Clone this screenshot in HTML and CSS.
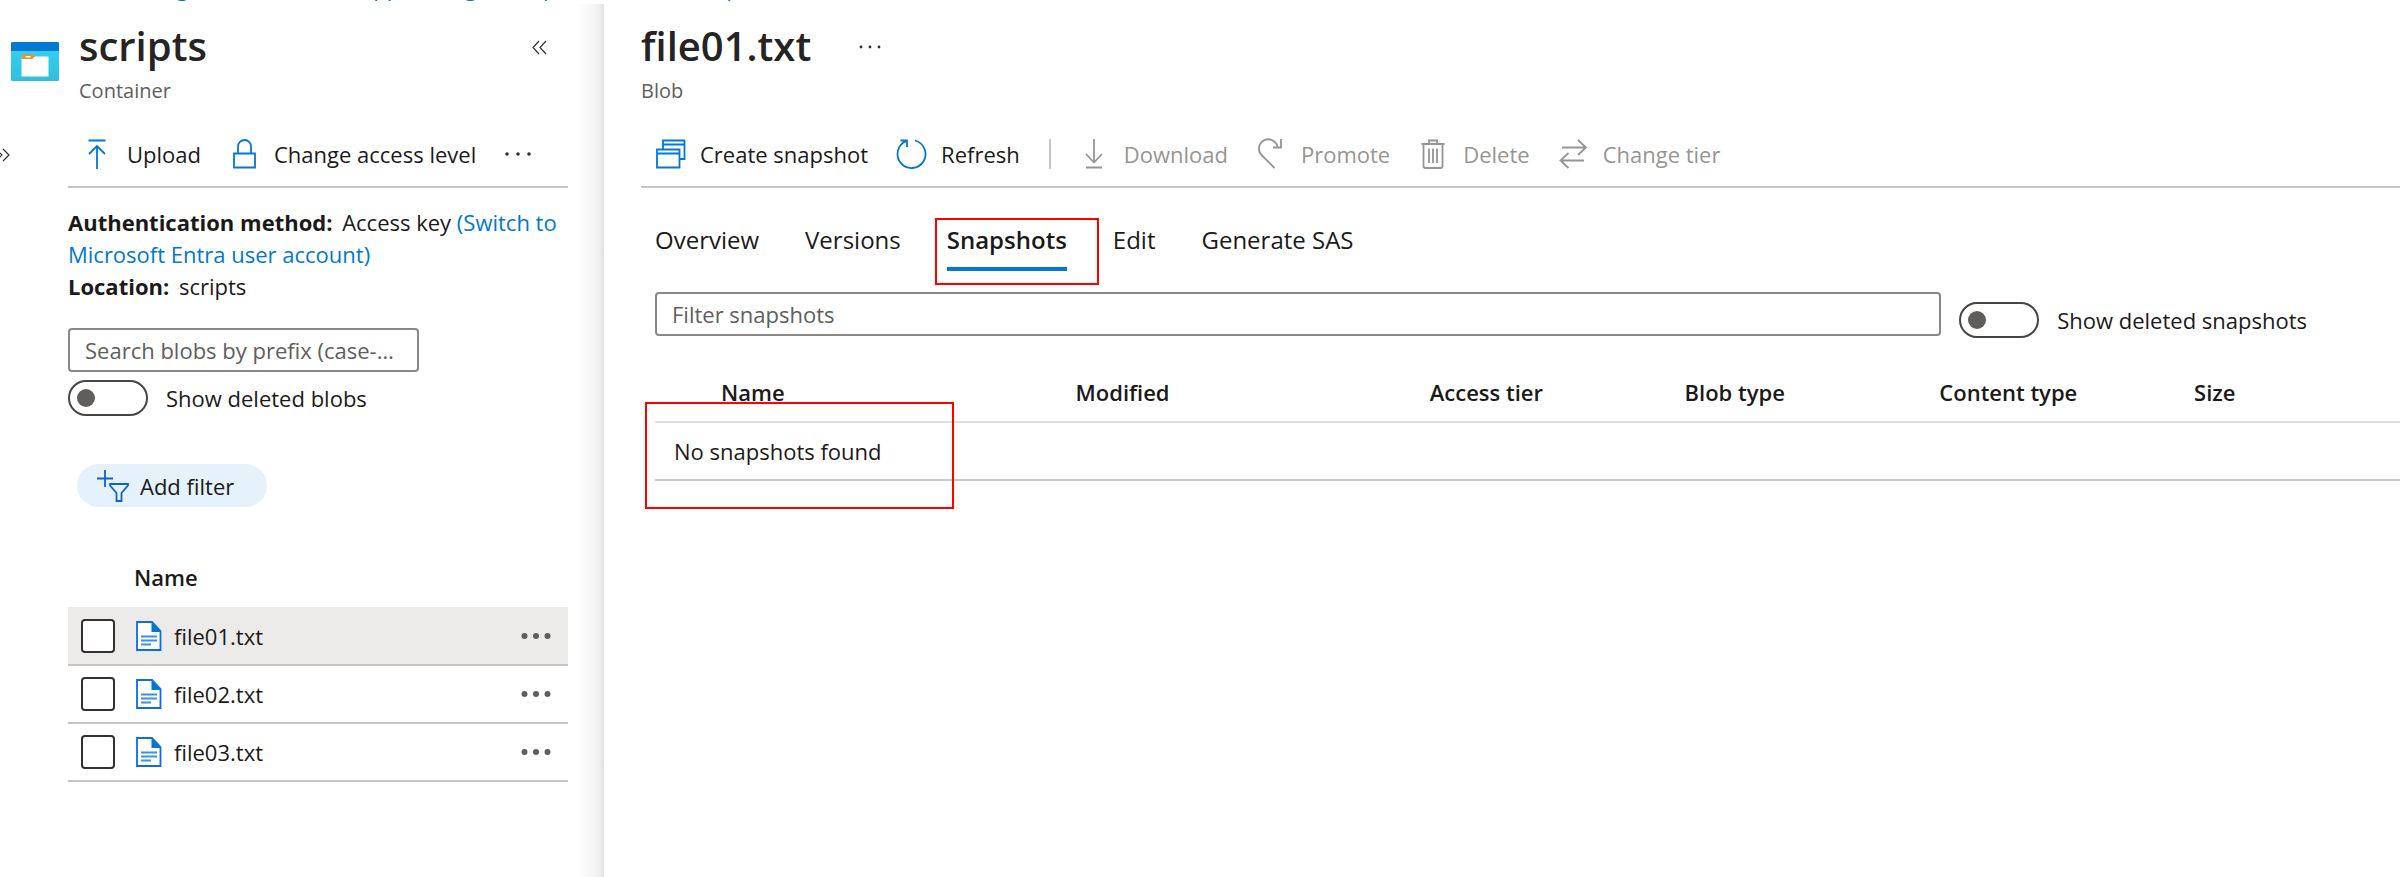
FILE: index.html
```
<!DOCTYPE html>
<html lang="en">
<head>
    <meta charset="UTF-8">
    <meta name="viewport" content="width=device-width, initial-scale=1.0">
    <title>file01.txt - Blob</title>
    <link rel="stylesheet" href="styles.css">
</head>
<body>
    <nav class="breadcrumb" aria-label="Breadcrumb">
        <a href="#">Storage accounts</a>
        <a href="#">webapp-settings</a>
        <a href="#">scripts</a>
        <a href="#">Containers</a>
        <a href="#">preview</a>
    </nav>
    <div class="page">
        <aside class="container-blade">
            <div class="rail">
                <svg class="container-icon" viewBox="0 0 48 39">
                    <defs>
                        <linearGradient id="sky" x1="0" y1="0" x2="0" y2="1">
                            <stop offset="0" stop-color="#32d4f5"/>
                            <stop offset="1" stop-color="#32bedd"/>
                        </linearGradient>
                    </defs>
                    <rect width="48" height="39" rx="1.5" fill="url(#sky)"/>
                    <path d="M0 9V1.5Q0 0 1.5 0H46.500Q48 0 48 1.500V9z" fill="#0078d4"/>
                    <path d="M10.500 15H24V14.500H37.500V34.500H10.500z" fill="#fff"/>
                    <path d="M11.500 12.500H22L24 14.500 21 17H10.500V13.500z" fill="#f78d1e"/>
                    <rect x="14.500" y="14" width="5" height="1.500" fill="#fff"/>
                </svg>
                <button class="expand" aria-label="Expand menu">
                    <svg viewBox="0 0 18 16"><path d="M3 2l6 6-6 6M10 2l6 6-6 6" class="thin"/></svg>
                </button>
            </div>
            <div class="blade-content">
                <header class="blade-header">
                    <div>
                        <h1>scripts</h1>
                        <p class="subtitle">Container</p>
                    </div>
                    <button class="collapse" aria-label="Collapse">
                        <svg viewBox="0 0 18 16"><path d="M9 2L3 8.500l6 6.500M16 2L10 8.500l6 6.500" class="thin"/></svg>
                    </button>
                </header>
                <div class="toolbar">
                    <button class="tool">
                        <svg class="icon blue" viewBox="0 0 28 30"><path d="M5.500 1.500h17M14 30V7M6 15l8-8 8 8"/></svg>
                        Upload
                    </button>
                    <button class="tool">
                        <svg class="icon blue" viewBox="0 0 28 30"><path d="M4 14.500h21v14H4zM8 14.500V7.500a6.500 6.500 0 0 1 13 0v7"/></svg>
                        Change access level
                    </button>
                    <button class="tool more" aria-label="More">
                        <svg class="dots" viewBox="0 0 26 6"><circle cx="2" cy="3" r="1.800"/><circle cx="13" cy="3" r="1.800"/><circle cx="24" cy="3" r="1.800"/></svg>
                    </button>
                </div>
                <div class="info">
                    <p><b>Authentication method:</b> Access key <a href="#">(Switch to Microsoft Entra user account)</a></p>
                    <p><b>Location:</b> scripts</p>
                </div>
                <input class="textbox search" type="text" aria-label="Search blobs" placeholder="Search blobs by prefix (case-sensitive)">
                <label class="toggle"><input type="checkbox" role="switch"> Show deleted blobs</label>
                <button class="add-filter">
                    <svg viewBox="0 0 34 32"><path d="M9 0v17M1 8.500h16M14 14h18v1.500l-6.500 7.500v8h-5v-8L14 15.500z"/></svg>
                    Add filter
                </button>
                <table class="files">
                    <thead>
                        <tr><th class="check-col"></th><th>Name</th><th class="menu-col"></th></tr>
                    </thead>
                    <tbody>
                        <tr class="selected">
                            <td><input class="check" type="checkbox" aria-label="Select file01.txt"></td>
                            <td><div class="file"><svg viewBox="0 0 26 30"><path d="M1 1h15l8.500 9v19H1z" fill="#fff" stroke="#0f6cde" stroke-width="1.800"/><path d="M15.500 1v10h9.500z" fill="#0078d4"/><path d="M5 15.500h16M5 19.500h16M5 23.500h10" stroke="#3d8ef0" stroke-width="1.800"/></svg>file01.txt</div></td>
                            <td><button class="row-menu" aria-label="Menu"><svg viewBox="0 0 30 8"><circle cx="3.500" cy="4" r="3"/><circle cx="15" cy="4" r="3"/><circle cx="26.500" cy="4" r="3"/></svg></button></td>
                        </tr>
                        <tr>
                            <td><input class="check" type="checkbox" aria-label="Select file02.txt"></td>
                            <td><div class="file"><svg viewBox="0 0 26 30"><path d="M1 1h15l8.500 9v19H1z" fill="#fff" stroke="#0f6cde" stroke-width="1.800"/><path d="M15.500 1v10h9.500z" fill="#0078d4"/><path d="M5 15.500h16M5 19.500h16M5 23.500h10" stroke="#3d8ef0" stroke-width="1.800"/></svg>file02.txt</div></td>
                            <td><button class="row-menu" aria-label="Menu"><svg viewBox="0 0 30 8"><circle cx="3.500" cy="4" r="3"/><circle cx="15" cy="4" r="3"/><circle cx="26.500" cy="4" r="3"/></svg></button></td>
                        </tr>
                        <tr>
                            <td><input class="check" type="checkbox" aria-label="Select file03.txt"></td>
                            <td><div class="file"><svg viewBox="0 0 26 30"><path d="M1 1h15l8.500 9v19H1z" fill="#fff" stroke="#0f6cde" stroke-width="1.800"/><path d="M15.500 1v10h9.500z" fill="#0078d4"/><path d="M5 15.500h16M5 19.500h16M5 23.500h10" stroke="#3d8ef0" stroke-width="1.800"/></svg>file03.txt</div></td>
                            <td><button class="row-menu" aria-label="Menu"><svg viewBox="0 0 30 8"><circle cx="3.500" cy="4" r="3"/><circle cx="15" cy="4" r="3"/><circle cx="26.500" cy="4" r="3"/></svg></button></td>
                        </tr>
                    </tbody>
                </table>
            </div>
        </aside>

        <main class="blob-blade">
            <header class="blade-header blob-header">
                <div>
                    <h1>file01.txt</h1>
                    <p class="subtitle">Blob</p>
                </div>
                <button class="title-more" aria-label="More">
                    <svg viewBox="0 0 22 6"><circle cx="2" cy="3" r="1.400"/><circle cx="11" cy="3" r="1.400"/><circle cx="20" cy="3" r="1.400"/></svg>
                </button>
            </header>
            <div class="toolbar blob-toolbar">
                <button class="tool">
                    <svg class="icon blue" viewBox="0 0 28 30"><path d="M7 10V1.500H28.500V20H24M7 5.500H28.500M1 10.500h22.500v18H1zM1 14.500h22.500"/></svg>
                    Create snapshot
                </button>
                <button class="tool">
                    <svg class="icon blue" viewBox="0 0 28 30"><path d="M18 1.500a14 14 0 1 1-9 .7M3.500 1.500h6.500v6.500"/></svg>
                    Refresh
                </button>
                <span class="divider"></span>
                <button class="tool" disabled>
                    <svg class="icon" viewBox="0 0 28 30"><path d="M14 0v23.500M6 15l8 8.500 8-8.500M6 28.500h16"/></svg>
                    Download
                </button>
                <button class="tool" disabled>
                    <svg class="icon" viewBox="0 0 28 30"><path d="M17.500 29L5 16.500A9.300 9.300 0 1 1 20.500 8.500M24 0v8.500h-8"/></svg>
                    Promote
                </button>
                <button class="tool" disabled>
                    <svg class="icon" viewBox="0 0 28 30"><path d="M2.500 5h23M10 5V1.500h8V5M4.500 5v22q0 2 2 2h15q2 0 2-2V5M10 9.500v14.500M14 9.500v14.500M18 9.500v14.500"/></svg>
                    Delete
                </button>
                <button class="tool" disabled>
                    <svg class="icon" viewBox="0 0 28 30"><path d="M3 8.500h24M19 1l8 7.500-8 7.500M25 21.500H1.500M9.500 14l-8 7.500 8 7.500"/></svg>
                    Change tier
                </button>
            </div>
            <div class="blob-body">
                <div class="tabs" role="tablist">
                    <button class="tab" role="tab">Overview</button>
                    <button class="tab" role="tab">Versions</button>
                    <button class="tab active" role="tab" aria-selected="true">Snapshots</button>
                    <button class="tab" role="tab">Edit</button>
                    <button class="tab" role="tab">Generate SAS</button>
                </div>
                <div class="filter-row">
                    <input class="textbox" type="text" aria-label="Filter snapshots" placeholder="Filter snapshots">
                    <label class="toggle"><input type="checkbox" role="switch"> Show deleted snapshots</label>
                </div>
                <div class="snapshots">
                    <table>
                        <thead>
                            <tr>
                                <th class="name-col">Name</th>
                                <th class="modified-col">Modified</th>
                                <th class="type-col">Access tier</th>
                                <th class="type-col">Blob type</th>
                                <th class="type-col">Content type</th>
                                <th>Size</th>
                            </tr>
                        </thead>
                        <tbody>
                            <tr><td colspan="6">No snapshots found</td></tr>
                        </tbody>
                    </table>
                </div>
            </div>
        </main>
    </div>
</body>
</html>
```
FILE: styles.css
```
*, *::before, *::after {
    box-sizing: border-box;
}

body, h1, p, table {
    margin: 0;
    padding: 0;
}

body {
    font-family: "Open Sans", "Noto Sans", sans-serif;
    font-size: 22px;
    line-height: 32px;
    color: #1b1a19;
    background-color: #fff;
    height: 100vh;
    overflow: hidden;
    display: flex;
    flex-direction: column;
}

button, input {
    font: inherit;
    color: inherit;
}

button {
    padding: 0;
    border: none;
    background: none;
    display: flex;
    align-items: center;
    cursor: pointer;
}

svg {
    display: block;
    flex: none;
    overflow: visible;
}

a {
    color: #0078d4;
    text-decoration: none;
}

/* breadcrumb is scrolled almost out of view */
.breadcrumb {
    height: 3px;
    margin-bottom: 1px;
    padding-left: 122px;
    display: flex;
    align-items: flex-end;
    gap: 20px;
    overflow: hidden;
    white-space: nowrap;
}

.page {
    flex: 1;
    display: flex;
}

.container-blade {
    width: 604px;
    flex: none;
    display: flex;
    padding-right: 36px;
    background: linear-gradient(to left, #e0e0e0, #f0f0f0 5px, #f8f8f8 14px, #fff 30px);
}

.rail {
    width: 68px;
    flex: none;
    padding: 38px 0 0 11px;
}

.container-icon {
    width: 48px;
    height: 39px;
}

.expand {
    margin: 66px 0 0 -18px;
}

.expand svg, .collapse svg {
    width: 18px;
    height: 16px;
}

.thin {
    fill: none;
    stroke: #323130;
    stroke-width: 1.2;
}

.blade-content {
    flex: 1;
    min-width: 0;
}

.blade-header {
    height: 120px;
    padding: 14px 20px 0 11px;
    display: flex;
    justify-content: space-between;
    align-items: flex-start;
}

h1 {
    font-size: 40px;
    line-height: 56px;
    font-weight: 600;
    color: #252423;
}

.subtitle {
    font-size: 20px;
    line-height: 34px;
    color: #605e5c;
}

.collapse {
    margin-top: 21px;
}

.toolbar {
    height: 64px;
    padding: 0 16px 3px 15px;
    display: flex;
    align-items: center;
    gap: 29px;
    border-bottom: 2px solid #c8c6c4;
}

.tool {
    gap: 16px;
    white-space: nowrap;
}

.tool:disabled {
    color: #979593;
}

.icon {
    width: 28px;
    height: 30px;
    fill: none;
    stroke: #979593;
    stroke-width: 1.8;
}

.icon.blue {
    stroke: #0078d4;
}

.dots {
    width: 26px;
    height: 6px;
    fill: #323130;
}

.info {
    padding: 18px 0 26px;
}

.info b {
    margin-right: 4px;
}

.textbox {
    height: 44px;
    padding: 0 15px;
    border: 2px solid #8a8886;
    border-radius: 4px;
    background-color: #fff;
    text-overflow: ellipsis;
}

.textbox::placeholder {
    color: #605e5c;
    opacity: 1;
}

.search {
    display: block;
    width: 351px;
}

.toggle {
    display: flex;
    align-items: center;
    gap: 18px;
    white-space: nowrap;
}

.toggle input {
    appearance: none;
    flex: none;
    width: 80px;
    height: 36px;
    margin: 0;
    padding: 7px;
    border: 2px solid #484644;
    border-radius: 18px;
    background-color: #fff;
}

.toggle input::before {
    content: "";
    display: block;
    width: 18px;
    height: 18px;
    border-radius: 50%;
    background-color: #605e5c;
}

.search + .toggle {
    margin-top: 8px;
}

.add-filter {
    height: 43px;
    margin: 48px 0 0 9px;
    padding: 0 33px 0 19px;
    gap: 10px;
    border-radius: 22px;
    background-color: #e5f1fb;
}

.add-filter svg {
    width: 34px;
    height: 32px;
    fill: none;
    stroke: #0f5fd7;
    stroke-width: 1.8;
}

table {
    width: 100%;
    border-collapse: collapse;
    table-layout: fixed;
}

th {
    padding: 0;
    text-align: left;
    font-weight: 600;
}

td {
    padding: 0;
}

.files {
    margin-top: 40px;
}

.files th {
    height: 60px;
}

.files tbody tr {
    height: 58px;
    border-bottom: 2px solid #c8c6c4;
}

.files .selected {
    background-color: #edebe9;
}

.check-col {
    width: 66px;
}

.menu-col {
    width: 47px;
}

.check {
    appearance: none;
    display: block;
    width: 34px;
    height: 34px;
    margin: 0 0 0 13px;
    border: 2px solid #323130;
    border-radius: 4px;
    background-color: #fff;
}

.file {
    display: flex;
    align-items: center;
    gap: 12px;
    padding-left: 2px;
}

.file svg {
    width: 26px;
    height: 30px;
}

.row-menu svg {
    width: 30px;
    height: 8px;
    fill: #605e5c;
}

.blob-blade {
    flex: 1;
    min-width: 0;
    padding-left: 37px;
    background-color: #fff;
}

.blob-header {
    padding-left: 0;
    justify-content: flex-start;
    gap: 48px;
}

.title-more {
    margin-top: 26px;
}

.title-more svg {
    width: 22px;
    height: 6px;
    fill: #323130;
}

.divider {
    width: 2px;
    height: 30px;
    background-color: #c8c6c4;
}

.blob-body {
    padding-left: 14px;
}

.tabs {
    display: flex;
    gap: 46px;
    padding-top: 34px;
    font-size: 24px;
}

.tab {
    height: 49px;
    align-items: flex-start;
    padding-top: 2px;
    position: relative;
}

.tab.active {
    font-weight: 600;
    border-bottom: 4px solid #0078d4;
}

/* red callout boxes */
.tab.active::after, .snapshots::after {
    content: "";
    position: absolute;
    border: 2px solid #f00;
    pointer-events: none;
}

.tab.active::after {
    left: -12px;
    right: -32px;
    top: -4px;
    height: 67px;
}

.filter-row {
    display: flex;
    gap: 18px;
    margin-top: 21px;
    padding-right: 93px;
}

.filter-row .textbox {
    flex: 1;
    min-width: 0;
}

.filter-row .toggle {
    padding-top: 10px;
}

.snapshots {
    position: relative;
    margin-top: 24px;
}

.snapshots::after {
    left: -10px;
    top: 40px;
    width: 309px;
    height: 107px;
}

.snapshots th {
    height: 60px;
}

.snapshots tr {
    border-bottom: 2px solid #e1dfdd;
}

.snapshots tbody tr {
    height: 58px;
    border-color: #c8c6c4;
}

.snapshots td {
    padding-left: 19px;
}

.snapshots .name-col {
    width: 24.1%;
    padding-left: 66px;
}

.modified-col {
    width: 20.3%;
}

.type-col {
    width: 14.6%;
}
```
